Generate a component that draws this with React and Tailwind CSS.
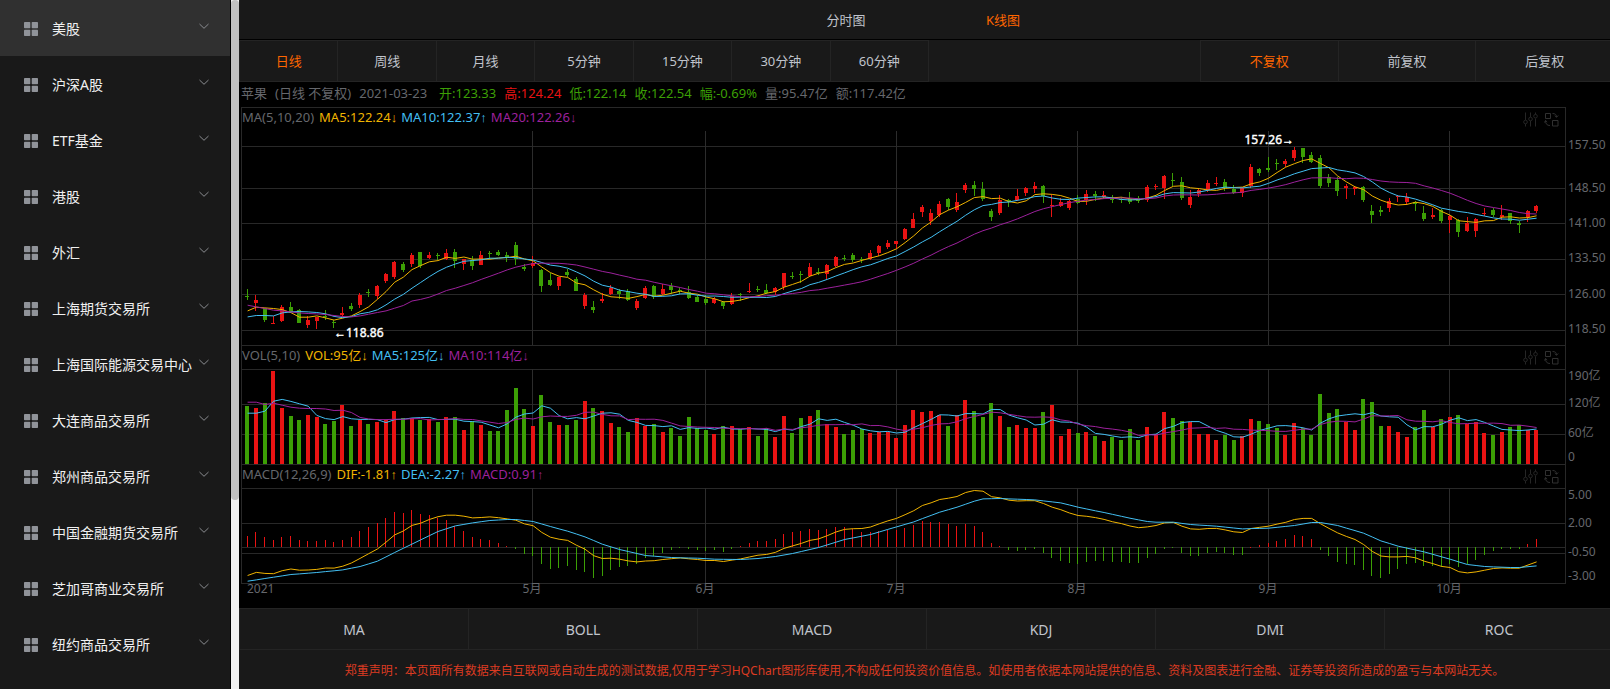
import React from "react";

const MARKETS = [
  "美股", "沪深A股", "ETF基金", "港股", "外汇", "上海期货交易所", "上海国际能源交易中心",
  "大连商品交易所", "郑州商品交易所", "中国金融期货交易所", "芝加哥商业交易所", "纽约商品交易所",
];
const PERIODS = ["日线", "周线", "月线", "5分钟", "15分钟", "30分钟", "60分钟"];
const RIGHTS = ["不复权", "前复权", "后复权"];
const INDICATORS = ["MA", "BOLL", "MACD", "KDJ", "DMI", "ROC"];

const RED = "#e91313";
const GREEN = "#3c9f05";
const YELLOW = "#f0b400";
const BLUE = "#43bff2";
const PURPLE = "#9c219c";
const GRID = "#282828";
const AXIS = "#65676c";

// One entry per day: colour, high, body top, body bottom, low (three units per chart pixel, downwards).
const CANDLES = `G 626 648 651 660,R 645 660 669 693,G 684 684 720 726,R 708 729 732 732,R 674 681 723 725,G 666 681 696 699,G 688 690 729 729,R 708 720 735 743,R 710 710 723 746,G 690 708 711 720,G 720 726 729 745,R 680 699 705 710,G 669 678 687 694,R 640 645 675 685,G 627 636 639 650,R 615 618 648 657,R 578 582 603 608,R 543 546 591 596,G 547 552 570 577,R 520 525 552 560,G 516 516 558 564,R 516 525 534 537,G 519 525 528 541,R 507 519 537 539,G 507 516 543 564,R 537 537 552 570,G 528 540 558 569,R 513 525 555 556,G 512 519 522 536,G 510 516 525 528,G 516 525 531 545,G 486 495 537 554,G 553 561 567 573,R 529 549 558 564,G 566 570 618 635,G 580 600 615 617,R 590 591 618 629,G 567 576 585 592,G 590 597 633 633,R 640 645 678 688,G 664 681 690 698,R 640 657 663 668,R 616 624 642 645,G 627 633 642 656,G 627 633 660 663,R 657 663 684 689,R 618 624 654 657,G 615 618 651 657,R 612 627 642 644,G 609 618 630 641,G 624 630 633 641,G 618 636 654 657,G 645 651 666 667,G 645 657 669 674,R 651 657 669 672,G 663 666 678 686,R 640 648 672 675,G 639 642 645 662,R 609 633 636 640,G 618 627 630 637,G 612 630 639 641,R 621 624 636 644,R 579 579 621 629,G 576 588 591 597,G 573 582 585 610,R 549 561 588 590,G 563 576 579 584,R 551 555 582 597,R 528 531 558 562,G 525 534 537 544,G 519 525 540 545,G 531 537 540 548,R 511 519 537 539,R 495 498 519 527,R 480 489 501 506,R 483 483 492 506,R 443 447 477 480,R 399 417 444 444,R 375 381 396 410,R 387 399 423 434,R 363 372 405 410,G 354 357 381 391,R 339 366 390 395,R 309 315 330 338,G 303 315 327 347,G 306 327 357 362,G 387 393 411 422,R 345 360 399 405,G 357 360 366 381,R 327 348 360 363,R 321 324 339 348,R 306 318 327 339,G 316 318 348 368,R 345 375 378 410,R 354 366 378 380,R 360 363 384 389,G 346 357 369 371,R 330 342 360 375,G 333 342 348 362,R 333 345 350 358,G 345 357 360 369,G 351 357 360 369,G 337 357 366 371,G 349 354 362 368,R 316 321 360 365,R 312 318 321 329,R 285 288 324 356,G 279 300 303 317,G 291 306 354 359,R 331 351 375 383,R 326 330 342 350,R 300 309 330 335,R 291 309 312 318,G 297 306 324 333,G 315 327 338 341,R 321 324 339 350,R 252 261 318 323,G 264 267 279 288,G 231 264 270 275,G 237 248 251 270,R 237 243 252 260,R 201 210 234 242,G 204 204 231 248,G 215 225 246 248,G 225 234 318 323,G 281 291 309 321,G 290 300 333 347,R 312 318 324 357,R 318 321 327 344,G 318 321 360 365,G 375 393 405 428,G 378 390 396 407,R 354 363 384 396,R 345 348 351 365,R 339 351 366 375,G 364 366 372 392,G 378 399 417 423,R 384 405 411 417,G 387 390 423 429,R 405 408 420 460,G 416 420 456 471,R 411 429 453 456,R 414 417 453 471,R 383 399 402 408,G 384 390 405 410,R 375 405 411 419,G 399 399 423 432,G 423 429 435 459,R 390 393 411 425,R 375 378 393 399`
  .split(",")
  .map((row) => {
    const [c, ...v] = row.split(" ");
    const [high, top, bottom, low] = v.map(Number);
    return { up: c === "R", high, top, bottom, low, close: c === "R" ? top : bottom };
  });

// Volume bars: colour and bar top.
const VOLUMES = "G183 R189 G174 R78 R189 G213 G225 R210 R216 G237 G228 R180 G243 R225 G237 R231 R225 R198 G219 R219 G225 R222 G231 R216 G216 R255 G228 R240 G258 G258 G195 G129 G192 R243 G150 G231 R240 G240 G225 R168 G189 R198 R234 G246 G261 R219 R243 G237 R261 G249 G273 G216 G249 G255 R267 G243 R243 G252 R246 G273 G249 R276 R213 G264 G219 R213 G195 R237 R246 G267 G255 G252 R264 R261 R261 R279 R240 R195 R201 R198 R210 G243 R210 R165 G198 G216 G174 R213 G246 R240 R249 R249 G201 R180 R273 R252 G264 R261 G273 R288 G276 G285 G252 G285 R246 R267 R201 G219 G228 R231 R267 R267 R285 G270 G285 R273 R222 G228 G237 G249 R270 R234 G249 G270 G147 G204 G192 R231 R255 G162 G171 G243 R243 R261 R276 G246 G195 R246 G222 R216 G210 R237 R231 R264 G270 R261 G246 G240 R255 R255"
  .split(" ")
  .map((s) => ({ up: s[0] === "R", top: Number(s.slice(1)) }));

const MACD_BARS = "573 562 576 586 576 574 585 588 588 585 591 585 576 558 546 534 519 501 503 495 507 510 518 526 543 558 577 582 585 593 603 611 627 632 657 671 669 662 674 681 698 693 675 665 663 657 640 634 623 614 608 612 615 618 615 620 611 603 595 587 588 582 567 561 558 552 555 552 546 546 552 561 562 558 556 556 549 540 528 531 531 538 543 537 543 561 595 603 615 618 614 612 623 639 648 655 657 651 648 648 651 651 654 654 639 627 611 608 624 633 632 624 620 624 630 629 606 600 595 588 582 571 573 582 614 633 651 657 660 675 693 698 687 671 657 654 663 663 665 657 666 657 645 629 617 611 611 611 597 583"
  .split(" ")
  .map(Number);

const DEA_KNOTS = [
  [0, 708], [3, 696], [5, 688], [8, 682], [11, 674], [13, 664], [15, 648], [17, 622], [20, 584], [22, 559],
  [24, 542], [26, 533], [28, 526], [30, 523], [31, 523], [33, 529], [35, 544], [37, 558], [39, 575], [41, 597],
  [43, 613], [46, 631], [49, 637], [52, 639], [54, 642], [57, 643], [59, 640], [61, 634], [63, 625], [66, 607],
  [69, 583], [72, 568], [75, 545], [77, 530], [80, 501], [82, 486], [84, 468], [85, 461], [87, 460], [89, 462],
  [91, 464], [94, 473], [96, 486], [99, 502], [102, 519], [104, 529], [105, 531], [107, 531], [109, 538],
  [112, 543], [115, 551], [118, 549], [121, 541], [123, 532], [124, 532], [126, 541], [129, 564], [131, 587],
  [133, 603], [136, 620], [139, 642], [141, 658], [143, 664], [146, 667], [147, 667], [149, 662],
];
const MACD_ZERO = 607;

const STEP = 8.651;
const FIRST = 8.33;
const MONTHS = [
  ["5月", 293], ["6月", 466], ["7月", 657], ["8月", 838], ["9月", 1029], ["10月", 1210],
];

function average(values, n, seed) {
  return values.map((_, i) =>
    i < n - 1 ? seed[i] : values.slice(i - n + 1, i + 1).reduce((a, b) => a + b, 0) / n
  );
}

function interpolate(knots) {
  const out = [];
  for (let k = 0; k < knots.length - 1; k++) {
    const [x0, y0] = knots[k];
    const [x1, y1] = knots[k + 1];
    for (let x = x0; x < x1; x++) out.push(y0 + ((y1 - y0) * (x - x0)) / (x1 - x0));
  }
  out.push(knots[knots.length - 1][1]);
  return out;
}

const closes = CANDLES.map((c) => c.close);
const ma5 = average(closes, 5, [692, 681, 683, 685]);
const ma10 = average(closes, 10, [710, 706, 706, 707, 698, 695, 694, 695, 697]);
const ma20 = average(closes, 20, [675, 680, 685, 690, 692, 695, 698, 700, 701, 703, 706, 709, 710, 707, 702, 697, 692, 684, 676]);
const volTops = VOLUMES.map((v) => v.top);
const vol5 = average(volTops, 5, [204, 204, 198, 168]);
const vol10 = average(volTops, 10, [171, 171, 178, 174, 180, 186, 189, 190, 190]);
const dea = interpolate(DEA_KNOTS);
const dif = dea.map((d, i) => d + (MACD_BARS[i] - MACD_ZERO) / 2);

const thinX = (i) => Math.floor(FIRST + STEP * i);
const barX = (i) => Math.round(FIRST + STEP * i) - 2;

function Line({ values, offset, color }) {
  const points = values
    .map((v, i) => `${(FIRST + 0.3 + STEP * i).toFixed(1)},${(v / 3 - offset + 0.2).toFixed(1)}`)
    .join(" ");
  return <polyline points={points} fill="none" stroke={color} strokeWidth="1" />;
}

function Frame({ height, rows }) {
  return (
    <g fill={GRID}>
      {rows.map((y) => (
        <rect key={y} x="2" y={y} width="1325" height="1" />
      ))}
      {MONTHS.map(([name, x]) => (
        <rect key={name} x={x} y="0" width="1" height={height} fill="#2c2c2c" />
      ))}
      <rect x="2" y="0" width="1" height={height} />
      <rect x="1326" y="0" width="1" height={height} />
    </g>
  );
}

function Labels({ items }) {
  return (
    <g fill={AXIS} fontSize="12">
      {items.map(([text, y]) => (
        <text key={text} x="1329" y={y}>{text}</text>
      ))}
    </g>
  );
}

function PaneHeader({ title, values }) {
  return (
    <div className="ml-[2px] mr-[44px] flex h-6 items-start border-x border-t border-[#282828] text-[13px] leading-[18px] text-[#65676c]">
      <span className="mr-[5px]">{title}</span>
      <div className="flex gap-1">
        {values.map(([text, cls]) => (
          <span key={text} className={cls}>{text}</span>
        ))}
      </div>
      <div className="ml-auto mr-1.5 flex gap-1.5 pt-1">
        <button type="button" aria-label="参数设置" className="text-[#262626]">
          <svg className="block size-[15px]" viewBox="0 0 15 15" fill="none" stroke="currentColor">
            <path d="M2.5 0.5v7.5M2.5 12v2.5M7.5 0.5v4.5M7.5 9v5.5M12.5 0.5v2M12.5 6.500v8" />
            <circle cx="2.500" cy="10" r="1.800" />
            <circle cx="7.500" cy="7" r="1.800" />
            <circle cx="12.500" cy="4.200" r="1.800" />
          </svg>
        </button>
        <button type="button" aria-label="切换指标" className="text-[#303030]">
          <svg className="block size-[15px]" viewBox="0 0 15 15" fill="none" stroke="currentColor">
            <path d="M1.500 1.500h5v5h-5zM8.500 8.500h5.500v5.500H8.500zM8.500 1.500c2.600 0 4 1 4 3.500M10.700 3.500l1.800 1.800 1.700-1.800M1.500 8.500c0 3.500 1.500 5 4.500 5M0.500 10.500l1-2 1.700 1.500" />
          </svg>
        </button>
      </div>
    </div>
  );
}

function PricePane() {
  const y = (v) => Math.round(v / 3 - 51);
  return (
    <svg className="block h-auto w-full overflow-visible" viewBox="0 0 1371 214" role="img" aria-label="K线">
      <Frame height={214} rows={[15, 57, 92, 128, 163, 199]} />
      {CANDLES.map((c, i) => (
        <g key={i} fill={c.up ? RED : GREEN}>
          <rect x={thinX(i)} y={y(c.high)} width="1" height={Math.max(1, y(c.low) - y(c.high))} />
          <rect x={barX(i)} y={y(c.top)} width="4" height={Math.max(1, y(c.bottom) - y(c.top))} />
        </g>
      ))}
      <Line values={ma5} offset={51} color={YELLOW} />
      <Line values={ma10} offset={51} color={BLUE} />
      <Line values={ma20} offset={51} color={PURPLE} />
      <g fill="#fff" stroke="#fff" strokeWidth="0.4" fontSize="12">
        <text x="95" y="206">←118.86</text>
        <text x="1055" y="13" textAnchor="end">157.26→</text>
      </g>
      <Labels items={[["157.50", 18], ["148.50", 61], ["141.00", 96], ["133.50", 131], ["126.00", 167], ["118.50", 202]]} />
    </svg>
  );
}

function VolumePane() {
  const y = (v) => Math.round(v / 3 - 24);
  return (
    <svg className="block h-auto w-full overflow-visible" viewBox="0 0 1371 95" role="img" aria-label="成交量">
      <Frame height={95} rows={[0, 35, 65]} />
      {VOLUMES.map((v, i) => (
        <rect key={i} x={barX(i)} y={y(v.top)} width="4" height={95 - y(v.top)} fill={v.up ? RED : GREEN} />
      ))}
      <Line values={vol5} offset={24} color={BLUE} />
      <Line values={vol10} offset={24} color={PURPLE} />
      <Labels items={[["190亿", 11], ["120亿", 38], ["60亿", 68], ["0", 92]]} />
    </svg>
  );
}

function MacdPane() {
  const zero = 59;
  return (
    <svg className="block h-auto w-full overflow-visible" viewBox="0 0 1371 120" role="img" aria-label="MACD">
      <Frame height={96} rows={[0, 35, 59, 65, 95]} />
      {MACD_BARS.map((v, i) => {
        const end = Math.round(v / 3 - 143);
        const up = v < MACD_ZERO;
        return (
          <rect
            key={i}
            x={thinX(i)}
            y={up ? end : zero}
            width="1"
            height={Math.max(1, Math.abs(end - zero))}
            fill={up ? RED : GREEN}
          />
        );
      })}
      <Line values={dif} offset={143} color={YELLOW} />
      <Line values={dea} offset={143} color={BLUE} />
      <Labels items={[["5.00", 11], ["2.00", 39], ["-0.50", 68], ["-3.00", 92]]} />
      <g fill={AXIS} fontSize="12">
        <text x="8" y="105">2021</text>
        {MONTHS.map(([name, x]) => (
          <text key={name} x={x} y="105" textAnchor="middle">{name}</text>
        ))}
      </g>
    </svg>
  );
}

function Sidebar() {
  return (
    <aside className="flex w-[239px] shrink-0 bg-black">
      <nav className="mr-px flex-1 bg-[#191919]">
        {MARKETS.map((name, i) => (
          <button
            key={name}
            type="button"
            className={
              "flex h-14 w-full items-center pt-0.5 pl-6 pr-5 text-left text-sm whitespace-nowrap text-[#f0f0f0] " +
              (i === 0 ? "bg-[#303030]" : "bg-[#191919]")
            }
          >
            <svg className="mr-3.5 size-3.5 shrink-0" viewBox="0 0 14 14" fill="#909399">
              <rect width="6.300" height="6.300" rx="0.700" />
              <rect x="7.700" width="6.300" height="6.300" rx="0.700" />
              <rect y="7.700" width="6.300" height="6.300" rx="0.700" />
              <rect x="7.700" y="7.700" width="6.300" height="6.300" rx="0.700" />
            </svg>
            <span className="flex-1">{name}</span>
            <svg className="mb-1.5 size-3 shrink-0" viewBox="0 0 12 12" fill="none" stroke="#8a8c90">
              <path d="M1.500 4l4.500 4.300L10.500 4" />
            </svg>
          </button>
        ))}
      </nav>
      <div className="w-2 bg-[#f1f1f1]">
        <div className="h-[500px] rounded bg-[#c1c1c1]" />
      </div>
    </aside>
  );
}

const SECURITY = ["苹果", "(日线 不复权)", "2021-03-23"];
const QUOTES = [
  ["开:123.33", "text-[#3c9f05]"],
  ["高:124.24", "text-[#e91313]"],
  ["低:122.14", "text-[#3c9f05]"],
  ["收:122.54", "text-[#3c9f05]"],
  ["幅:-0.69%", "text-[#3c9f05]"],
  ["量:95.47亿", ""],
  ["额:117.42亿", ""],
];

export default function App() {
  return (
    <div className="flex min-h-screen bg-black font-['Noto_Sans','Liberation_Sans','Noto_Sans_CJK_SC',sans-serif] text-[13px] text-[#c0c4cc]">
      <Sidebar />
      <main className="flex min-w-0 flex-1 flex-col overflow-hidden">
        <div className="mb-px flex h-[39px] justify-center bg-[#191919]">
          <button type="button" className="w-[157px] pt-0.5">分时图</button>
          <button type="button" className="w-[157px] pt-0.5 text-[#ff6600]">K线图</button>
        </div>
        <div className="grid h-[42px] grid-cols-[minmax(0,690fr)_minmax(0,271fr)_minmax(0,410fr)] bg-[#191919]">
          <div className="grid grid-cols-7 border-y border-l border-[#242424]">
            {PERIODS.map((p, i) => (
              <button key={p} type="button" className={"border-r border-[#242424] pt-0.5 " + (i === 0 ? "text-[#ff6600]" : "")}>
                {p}
              </button>
            ))}
          </div>
          <div />
          <div className="-mr-1 grid grid-cols-3 border-y border-l border-[#242424]">
            {RIGHTS.map((r, i) => (
              <button key={r} type="button" className={"border-r border-[#242424] pt-0.5 " + (i === 0 ? "text-[#ff6600]" : "")}>
                {r}
              </button>
            ))}
          </div>
        </div>
        <div className="flex h-[25px] items-start gap-3 pl-0.5 pt-px leading-5 whitespace-nowrap text-[#65676c]">
          <div className="flex gap-2">
            {SECURITY.map((text) => (
              <span key={text}>{text}</span>
            ))}
          </div>
          <div className="flex gap-2">
            {QUOTES.map(([text, cls]) => (
              <span key={text} className={cls}>{text}</span>
            ))}
          </div>
        </div>
        <PaneHeader
          title="MA(5,10,20)"
          values={[["MA5:122.24↓", "text-[#f0b400]"], ["MA10:122.37↑", "text-[#43bff2]"], ["MA20:122.26↓", "text-[#9c219c]"]]}
        />
        <PricePane />
        <PaneHeader
          title="VOL(5,10)"
          values={[["VOL:95亿↓", "text-[#f0b400]"], ["MA5:125亿↓", "text-[#43bff2]"], ["MA10:114亿↓", "text-[#9c219c]"]]}
        />
        <VolumePane />
        <PaneHeader
          title="MACD(12,26,9)"
          values={[["DIF:-1.81↑", "text-[#f0b400]"], ["DEA:-2.27↑", "text-[#43bff2]"], ["MACD:0.91↑", "text-[#9c219c]"]]}
        />
        <MacdPane />
        <div className="-mr-1 grid h-[42px] grid-cols-6 border-y border-l border-[#242424] bg-[#191919] text-sm">
          {INDICATORS.map((name) => (
            <button key={name} type="button" className="border-r border-[#242424] pt-0.5">{name}</button>
          ))}
        </div>
        <p className="flex-1 bg-[#191919] pt-[13px] text-center text-xs leading-4 text-[#dc3b22]">
          郑重声明：本页面所有数据来自互联网或自动生成的测试数据,仅用于学习HQChart图形库使用,不构成任何投资价值信息。如使用者依据本网站提供的信息、资料及图表进行金融、证券等投资所造成的盈亏与本网站无关。
        </p>
      </main>
    </div>
  );
}
